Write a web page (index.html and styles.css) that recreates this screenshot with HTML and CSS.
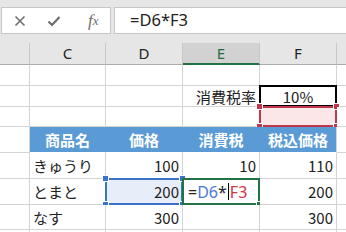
FILE: index.html
```html
<!DOCTYPE html>
<html lang="ja">
<head>
<meta charset="utf-8">
<link rel="stylesheet" href="styles.css">
</head>
<body>
<div class="app">
  <div class="fbar">
    <div class="tools">
      <span class="tool">
        <svg width="12" height="12" viewBox="0 0 12 12"><path d="M1.5 1.5 L10.5 10.5 M10.5 1.5 L1.5 10.5" stroke="#6e6e6e" stroke-width="1.6" fill="none"/></svg>
      </span>
      <span class="tool">
        <svg width="14" height="12" viewBox="0 0 14 12"><path d="M1.5 6.5 L5 10 L12.5 2" stroke="#6e6e6e" stroke-width="2.2" fill="none"/></svg>
      </span>
      <span class="tool fx">f<span class="x">x</span></span>
    </div>
    <div class="formula">=D6*F3</div>
  </div>
  <div class="sheet">
    <div class="ch"></div>
    <div class="ch">C</div>
    <div class="ch">D</div>
    <div class="ch sel">E</div>
    <div class="ch">F</div>
    <div class="ch end"></div>

    <div class="c r1"></div><div class="c r1"></div><div class="c r1"></div><div class="c r1"></div><div class="c r1"></div><div class="c r1 end"></div>

    <div class="c r2"></div><div class="c r2"></div><div class="c r2"></div><div class="c r2 right">消費税率</div><div class="c r2 center rate">10%</div><div class="c r2 end"></div>

    <div class="c r3"></div><div class="c r3"></div><div class="c r3"></div><div class="c r3"></div><div class="c r3 ref"><i class="h tl"></i><i class="h tr"></i><i class="h bl"></i><i class="h br"></i></div><div class="c r3 end"></div>

    <div class="c r4"></div><div class="c r4 th">商品名</div><div class="c r4 th">価格</div><div class="c r4 th">消費税</div><div class="c r4 th">税込価格</div><div class="c r4 end"></div>

    <div class="c r5"></div><div class="c r5">きゅうり</div><div class="c r5 right">100</div><div class="c r5 right">10</div><div class="c r5 right">110</div><div class="c r5 end"></div>

    <div class="c r6"></div><div class="c r6">とまと</div><div class="c r6 right dsel">200<i class="h bl2 tl"></i><i class="h bl2 tr"></i><i class="h bl2 bl"></i><i class="h bl2 br"></i></div><div class="c r6 edit">=<span class="rb">D6</span>*<span class="cur"></span><span class="rr">F3</span><i class="gh"></i></div><div class="c r6 right">200</div><div class="c r6 end"></div>

    <div class="c r7"></div><div class="c r7">なす</div><div class="c r7 right">300</div><div class="c r7"></div><div class="c r7 right">300</div><div class="c r7 end"></div>

    <div class="c r8"></div><div class="c r8"></div><div class="c r8"></div><div class="c r8"></div><div class="c r8"></div><div class="c r8 end"></div>
  </div>
</div>
</body>
</html>
```
FILE: styles.css
```css
html, body {
  margin: 0;
  padding: 0;
  background: #ffffff;
}
.app {
  width: 346px;
  height: 232px;
  overflow: hidden;
  background: #e6e6e6;
  font-family: "Noto Sans CJK JP", "Noto Sans", sans-serif;
  color: #222;
}
.fbar {
  display: flex;
  gap: 3px;
  padding: 7px 0 0 1px;
  height: 36px;
  box-sizing: border-box;
}
.tools {
  width: 110px;
  height: 27px;
  box-sizing: border-box;
  background: #fff;
  border: 1px solid #c6c6c6;
  display: flex;
  align-items: center;
}
.tool {
  width: 36px;
  display: flex;
  justify-content: center;
  align-items: center;
}
.tool:first-child { width: 38px; }
.fx {
  font-family: "Liberation Serif", serif;
  font-style: italic;
  font-size: 17px;
  color: #6e6e6e;
  padding-left: 6px;
  line-height: 1;
}
.fx .x { font-size: 13px; }
.formula {
  flex: 1;
  height: 27px;
  box-sizing: border-box;
  background: #fff;
  border: 1px solid #c6c6c6;
  border-right: none;
  font-family: "Noto Sans", sans-serif;
  font-size: 16.5px;
  line-height: 24px;
  padding-left: 15px;
  color: #222;
}
.sheet {
  margin-top: 7px;
  display: grid;
  grid-template-columns: 30px 76px 77px 77px 77px 1fr;
  grid-template-rows: 22px 21px 21px 20px 26px 26px 26px 25px 20px;
}
.ch {
  background: #e6e6e6;
  border-right: 1px solid #c8c8c8;
  border-bottom: 1px solid #ababab;
  font-family: "Noto Sans", sans-serif;
  font-size: 15px;
  line-height: 21px;
  text-align: center;
  color: #222;
}
.ch.sel {
  background: #d2d2d2;
  color: #1e6e44;
  border-bottom: 2px solid #217346;
  line-height: 20px;
}
.ch.end, .c.end { border-right: none; }
.c {
  position: relative;
  background: #fff;
  border-right: 1px solid #d4d4d4;
  border-bottom: 1px solid #d4d4d4;
  font-size: 15px;
  padding: 0 3px;
  display: flex;
  align-items: center;
  white-space: nowrap;
}
.right { justify-content: flex-end; }
.center { justify-content: center; }
.rate {
  box-shadow: inset 0 0 0 2px #000;
  margin: -1px 0 0 -1px;
  border: none;
  padding-top: 1px;
}
.ref {
  background: #fbe7e8;
  box-shadow: inset 0 0 0 2px #c0374a;
  margin: -1px 0 0 -1px;
  border: none;
}
.h {
  position: absolute;
  width: 5px;
  height: 5px;
  background: #c0374a;
  border: 1px solid #fff;
}
.h.tl { left: -3px; top: -3px; }
.h.tr { right: -3px; top: -3px; }
.h.bl { left: -3px; bottom: -3px; }
.h.br { right: -3px; bottom: -3px; }
.h.bl2 { background: #3a73c9; }
.th {
  background: #5b9bd5;
  border-right-color: #5b9bd5;
  border-bottom-color: #fff;
  color: #fff;
  font-weight: bold;
  justify-content: center;
}
.c.th:nth-child(6n+5) { border-right-color: #d4d4d4; }
.dsel {
  background: #e8eef9;
  box-shadow: inset 0 0 0 2px #3a73c9;
  margin: -1px 0 0 -1px;
  border: none;
  padding-right: 4px;
}
.edit {
  box-shadow: inset 0 0 0 2px #217346;
  margin: -1px 0 0 -1px;
  border: none;
  padding-left: 6px;
  font-family: "Noto Sans", sans-serif;
  font-size: 16px;
  color: #222;
}
.rb { color: #4a7ad6; }
.rr { color: #d0383e; }
.cur {
  display: inline-block;
  width: 1px;
  height: 17px;
  background: #000;
  margin: 0 1px;
}
.gh {
  position: absolute;
  right: -3px;
  bottom: -3px;
  width: 5px;
  height: 5px;
  background: #217346;
  border: 1px solid #fff;
}
```
